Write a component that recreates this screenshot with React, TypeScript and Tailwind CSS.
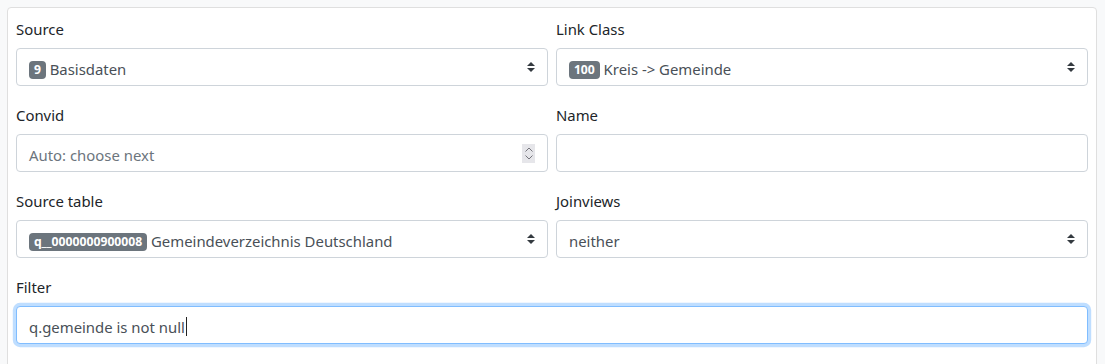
import React from "react";

const font = { fontFamily: '"Noto Sans", "Open Sans", sans-serif' };

function Badge({ children }: { children: React.ReactNode }) {
  return (
    <span className="inline-block rounded-[4px] bg-[#6c757d] px-[4.9px] py-[3px] text-[12.2px] font-bold leading-none text-white align-[1px]">
      {children}
    </span>
  );
}

function SelectArrow() {
  return (
    <svg width="8" height="10" viewBox="0 0 4 5" className="shrink-0">
      <path d="M2 0L0 2h4zm0 5L0 3h4z" fill="#343a40" />
    </svg>
  );
}

function Select({ children }: { children: React.ReactNode }) {
  return (
    <div className="flex h-[38px] items-center justify-between rounded-[4px] border border-[#ced4da] bg-white pl-3 pr-3 text-[#495057]">
      <div className="truncate pt-[3px] leading-6">{children}</div>
      <SelectArrow />
    </div>
  );
}

function Label({ children }: { children: React.ReactNode }) {
  return <div className="mb-2 pt-[2px] leading-[22px] text-[#212529]">{children}</div>;
}

export default function App() {
  return (
    <div className="min-h-[364px] bg-[#f8f9fa] pl-[7px] pr-[8px] pt-[7px] text-[14.9px]" style={font}>
      <div className="rounded-[4px] border border-[#dfdfdf] bg-white p-2">
        <div className="grid grid-cols-2 gap-x-2">
          <div className="mb-4">
            <Label>Source</Label>
            <Select>
              <Badge>9</Badge> Basisdaten
            </Select>
          </div>
          <div className="mb-4">
            <Label>Link Class</Label>
            <Select>
              <Badge>100</Badge> Kreis -&gt; Gemeinde
            </Select>
          </div>
          <div className="mb-4">
            <Label>Convid</Label>
            <div className="flex h-[38px] items-center justify-between rounded-[4px] border border-[#ced4da] bg-white px-3">
              <span className="pt-[3px] leading-6 text-[#6c757d]">Auto: choose next</span>
              <div className="flex h-[19px] w-[13px] flex-col items-center justify-center gap-[3px] bg-[#e6e6ea]">
                <svg width="8" height="5" viewBox="0 0 8 5">
                  <path d="M0.5 4.5L4 1L7.5 4.5" stroke="#75757c" strokeWidth="1" fill="none" />
                </svg>
                <svg width="8" height="5" viewBox="0 0 8 5">
                  <path d="M0.5 0.5L4 4L7.5 0.5" stroke="#75757c" strokeWidth="1" fill="none" />
                </svg>
              </div>
            </div>
          </div>
          <div className="mb-4">
            <Label>Name</Label>
            <div className="h-[38px] rounded-[4px] border border-[#ced4da] bg-white" />
          </div>
          <div className="mb-4">
            <Label>Source table</Label>
            <Select>
              <Badge>q__0000000900008</Badge> Gemeindeverzeichnis Deutschland
            </Select>
          </div>
          <div className="mb-4">
            <Label>Joinviews</Label>
            <Select>neither</Select>
          </div>
        </div>
        <div className="mb-4">
          <Label>Filter</Label>
          <div className="flex h-[38px] items-center rounded-[4px] border border-[#80bdff] bg-white px-3 shadow-[0_0_0_3.2px_rgba(0,123,255,0.25)]">
            <span className="pt-[3px] leading-6 text-[#495057]">q.gemeinde is not null</span>
            <span className="ml-[1px] mt-[2px] inline-block h-[19px] w-[1px] bg-[#222]" />
          </div>
        </div>
      </div>
    </div>
  );
}
